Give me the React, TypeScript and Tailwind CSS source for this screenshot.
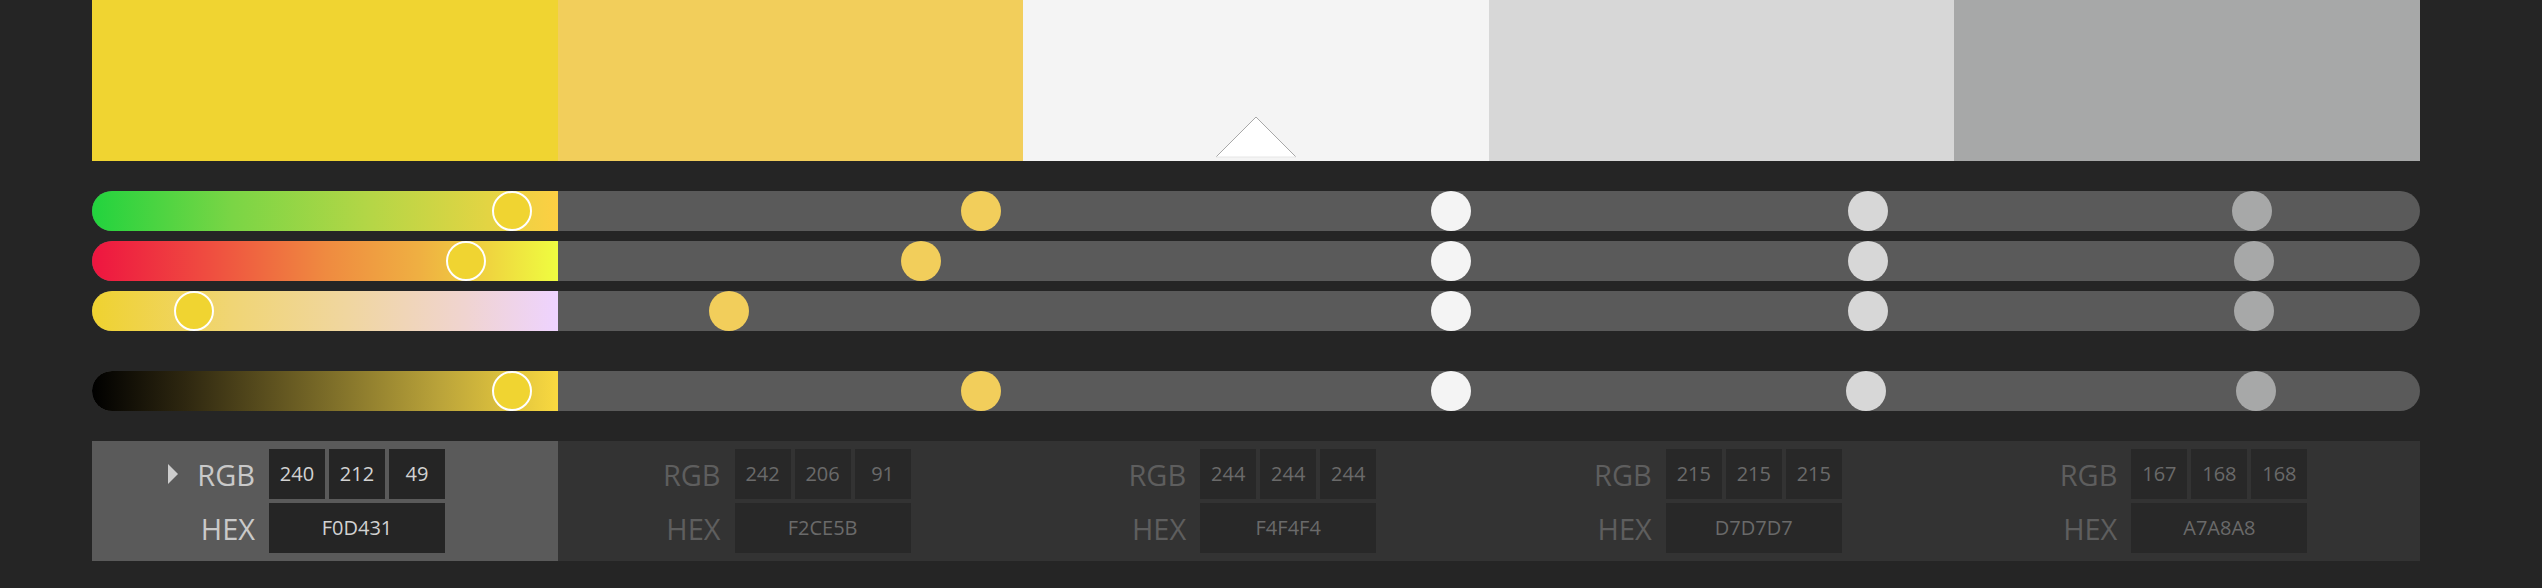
import React from "react";

const swatches = [
  { hex: "F0D431", rgb: [240, 212, 49], color: "#F0D431" },
  { hex: "F2CE5B", rgb: [242, 206, 91], color: "#F2CE5B" },
  { hex: "F4F4F4", rgb: [244, 244, 244], color: "#F4F4F4" },
  { hex: "D7D7D7", rgb: [215, 215, 215], color: "#D7D7D7" },
  { hex: "A7A8A8", rgb: [167, 168, 168], color: "#A7A8A8" },
];

const SEG = 2328 / 5;
const LEFT = 92;

const rows: { centers: number[]; gradient: string; extraTop?: boolean }[] = [
  {
    centers: [512, 981, 1451, 1868, 2252],
    gradient:
      "linear-gradient(to right, #22d33e 0%, #7ad545 30%, #b5d646 60%, #e3d443 85%, #fdcf43 100%)",
  },
  {
    centers: [466, 921, 1451, 1868, 2254],
    gradient:
      "linear-gradient(to right, #ee1540 0%, #ef4d40 25%, #ef8a40 50%, #efaf42 70%, #efd43f 85%, #effd40 100%)",
  },
  {
    centers: [194, 729.5, 1451, 1868, 2254],
    gradient:
      "linear-gradient(to right, #efd230 0%, #f0d575 30%, #f0d6a0 55%, #f0d4d0 80%, #eed3ff 100%)",
  },
  {
    centers: [512, 981, 1451, 1866, 2256],
    gradient:
      "linear-gradient(to right, #000000 0%, #2e2710 20%, #7a6b28 50%, #bba43a 75%, #f9d940 100%)",
    extraTop: true,
  },
];

function SliderRow({ centers, gradient, extraTop }: { centers: number[]; gradient: string; extraTop?: boolean }) {
  return (
    <div className={`flex h-[40px] rounded-full overflow-hidden bg-[#5a5a5a] ${extraTop ? "mt-[30px]" : ""}`}>
      {swatches.map((s, i) => {
        const left = centers[i] - (LEFT + i * SEG) - 20;
        return (
          <div key={i} className="relative flex-1 h-full" style={i === 0 ? { backgroundImage: gradient } : undefined}>
            {i === 0 ? (
              <div
                className="absolute top-0 w-[40px] h-[40px] rounded-full border-2 border-white"
                style={{ left, backgroundColor: s.color }}
              />
            ) : (
              <div
                className="absolute top-0 w-[40px] h-[40px] rounded-full"
                style={{ left, backgroundColor: s.color }}
              />
            )}
          </div>
        );
      })}
    </div>
  );
}

function InfoCell({ s, selected }: { s: (typeof swatches)[number]; selected: boolean }) {
  const bg = selected ? "bg-[#5a5a5a]" : "bg-[#333333]";
  const label = selected ? "text-[#c9c9c9]" : "text-[#5e5e5e]";
  const box = selected ? "bg-[#252525] text-[#d2d2d2]" : "bg-[#282828] text-[#6a6a6a]";
  return (
    <div className={`flex-1 h-full ${bg} flex flex-col justify-center gap-[4px] pl-[76px]`}>
      <div className="flex items-center h-[50px]">
        <div className="w-[10px] h-[20px] flex items-center">
          {selected && (
            <svg width="10" height="20" viewBox="0 0 10 20">
              <polygon points="0,0 10,10 0,20" fill="#cdcdcd" />
            </svg>
          )}
        </div>
        <div className={`w-[77px] text-right text-[29px] font-medium leading-none ${label}`}>RGB</div>
        <div className="ml-[14px] flex gap-[4px]">
          {s.rgb.map((v, k) => (
            <div key={k} className={`w-[56px] h-[50px] flex items-center justify-center text-[20px] ${box}`}>
              {v}
            </div>
          ))}
        </div>
      </div>
      <div className="flex items-center h-[50px]">
        <div className="w-[10px]" />
        <div className={`w-[77px] text-right text-[29px] font-medium leading-none ${label}`}>HEX</div>
        <div className={`ml-[14px] w-[176px] h-[50px] flex items-center justify-center text-[20px] ${box}`}>
          {s.hex}
        </div>
      </div>
    </div>
  );
}

export default function App() {
  return (
    <div className="w-[2542px] h-[588px] bg-[#252525] overflow-hidden font-['Open_Sans',sans-serif]">
      <div className="ml-[92px] w-[2328px] flex flex-col">
        <div className="flex h-[161px]">
          {swatches.map((s, i) => (
            <div key={i} className="relative flex-1 h-full" style={{ backgroundColor: s.color }}>
              {i === 2 && (
                <svg
                  className="absolute bottom-[3px] left-1/2 -translate-x-1/2"
                  width="82"
                  height="42"
                  viewBox="0 0 82 42"
                >
                  <polygon points="1,41 41,1 81,41" fill="#ffffff" />
                  <polyline points="1,41 41,1 81,41" fill="none" stroke="#a8a8a8" strokeWidth="1" />
                  <line x1="1" y1="41" x2="81" y2="41" stroke="#e6e6e6" strokeWidth="1" />
                </svg>
              )}
            </div>
          ))}
        </div>
        <div className="mt-[30px] flex flex-col gap-[10px]">
          {rows.map((r, i) => (
            <SliderRow key={i} centers={r.centers} gradient={r.gradient} extraTop={r.extraTop} />
          ))}
        </div>
        <div className="mt-[30px] h-[120px] flex">
          {swatches.map((s, i) => (
            <InfoCell key={i} s={s} selected={i === 0} />
          ))}
        </div>
      </div>
    </div>
  );
}
